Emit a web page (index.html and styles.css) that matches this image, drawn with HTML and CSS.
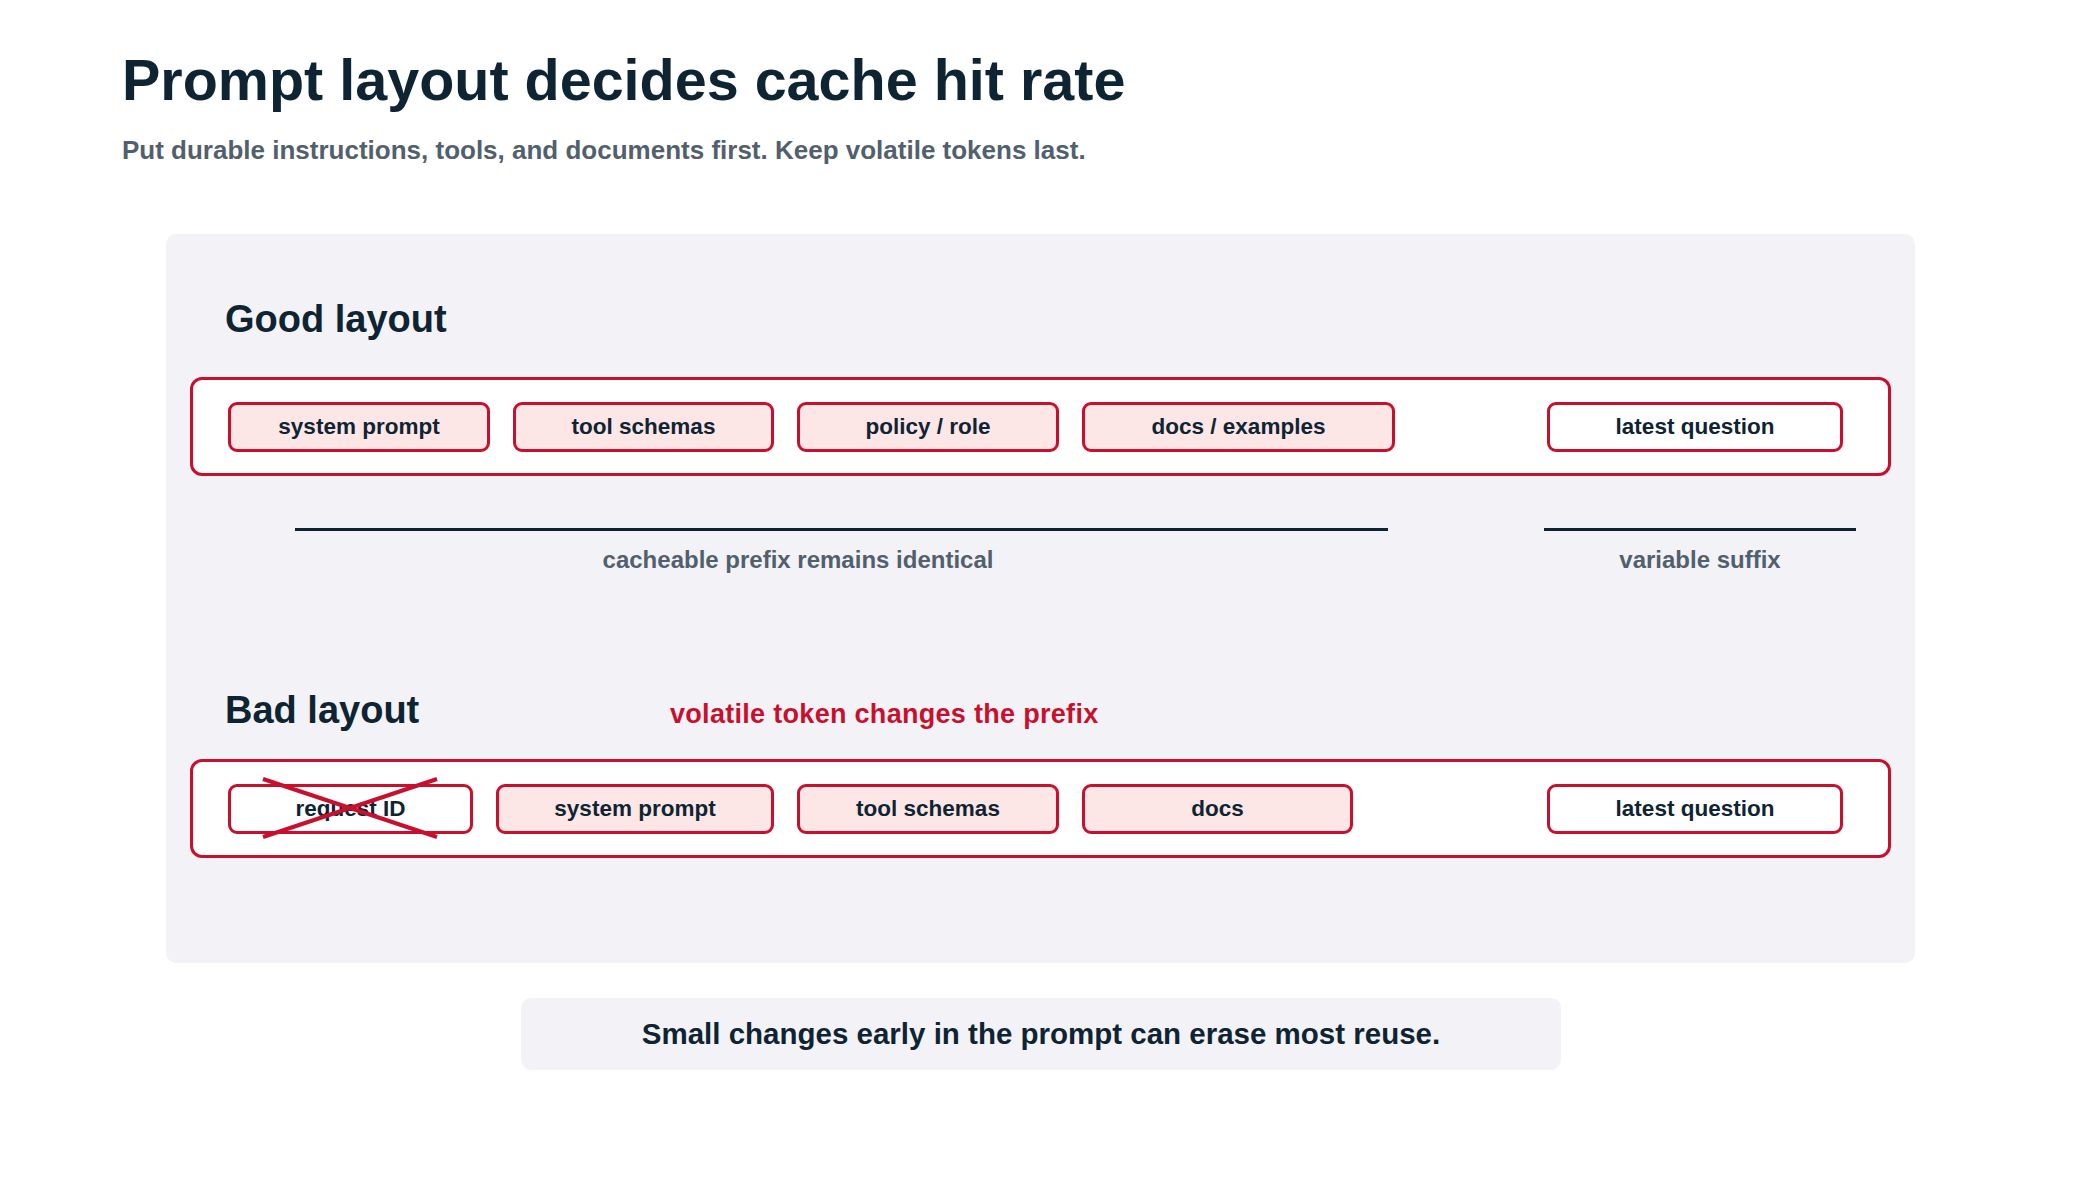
FILE: index.html
```html
<!DOCTYPE html>
<html lang="en">
<head>
<meta charset="utf-8">
<title>Prompt layout decides cache hit rate</title>
<link rel="stylesheet" href="styles.css">
</head>
<body>
<header class="hero">
  <h1 class="title">Prompt layout decides cache hit rate</h1>
  <p class="subtitle">Put durable instructions, tools, and documents first. Keep volatile tokens last.</p>
</header>

<main class="panel">
  <section class="block block-good">
    <h2 class="block-title">Good layout</h2>
    <div class="seq">
      <div class="seq-prefix">
        <div class="chip chip-cached w262">system prompt</div>
        <div class="chip chip-cached w261">tool schemas</div>
        <div class="chip chip-cached w262">policy / role</div>
        <div class="chip chip-cached w313">docs / examples</div>
      </div>
      <div class="chip chip-live w296">latest question</div>
    </div>
    <div class="spans">
      <div class="span span-prefix">
        <div class="span-line"></div>
        <div class="span-label label-offset">cacheable prefix remains identical</div>
      </div>
      <div class="span span-suffix">
        <div class="span-line"></div>
        <div class="span-label">variable suffix</div>
      </div>
    </div>
  </section>

  <section class="block block-bad">
    <div class="block-head">
      <h2 class="block-title head-wide">Bad layout</h2>
      <p class="warning">volatile token changes the prefix</p>
    </div>
    <div class="seq">
      <div class="seq-prefix">
        <div class="chip chip-live chip-struck w245">request ID
          <svg class="strike" width="174" height="58" viewBox="0 0 174 58" aria-hidden="true">
            <line x1="0" y1="0" x2="174" y2="58"/>
            <line x1="0" y1="58" x2="174" y2="0"/>
          </svg>
        </div>
        <div class="chip chip-cached w278">system prompt</div>
        <div class="chip chip-cached w262">tool schemas</div>
        <div class="chip chip-cached w271">docs</div>
      </div>
      <div class="chip chip-live w296">latest question</div>
    </div>
  </section>
</main>

<footer class="note">
  <p class="note-text">Small changes early in the prompt can erase most reuse.</p>
</footer>
</body>
</html>
```

FILE: styles.css
```css
* {
  box-sizing: border-box;
}

html, body {
  margin: 0;
  padding: 0;
  background: #ffffff;
}

body {
  font-family: "Liberation Sans", Arial, Helvetica, sans-serif;
  font-weight: 700;
  color: #0f2433;
  width: 2082px;
  min-height: 1180px;
}

.hero {
  padding: 52px 0 0 122px;
}

.title {
  margin: 0;
  font-size: 57.5px;
  line-height: 57px;
  font-weight: 700;
  color: #0f2433;
}

.subtitle {
  margin: 28px 0 0 0;
  font-size: 26px;
  line-height: 26px;
  color: #52606d;
}

.panel {
  width: 1749px;
  margin: 71px 0 0 166px;
  padding: 66px 24px 105px 24px;
  background: #f3f3f7;
  border-radius: 10px;
}

.block-title {
  margin: 0 0 0 35px;
  font-size: 38px;
  line-height: 38px;
  font-weight: 700;
  color: #0f2433;
}

.seq {
  margin-top: 39px;
  height: 99px;
  display: flex;
  align-items: center;
  padding: 0 45px 0 35px;
  background: #ffffff;
  border: 3px solid #c8102e;
  border-radius: 12px;
}

.seq-prefix {
  display: flex;
  gap: 23px;
}

.chip {
  position: relative;
  height: 50px;
  display: flex;
  align-items: center;
  justify-content: center;
  border: 3px solid #c8102e;
  border-radius: 9px;
  font-size: 22.5px;
  color: #0f2433;
  white-space: nowrap;
}

.chip-cached {
  background: #fde6e6;
}

.chip-live {
  background: #ffffff;
}

.seq > .chip-live {
  margin-left: auto;
}

.w245 { width: 245px; }
.w261 { width: 261px; }
.w262 { width: 262px; }
.w271 { width: 271px; }
.w278 { width: 278px; }
.w296 { width: 296px; }
.w313 { width: 313px; }

.strike {
  position: absolute;
  left: 32px;
  top: -8px;
  overflow: visible;
}

.strike line {
  stroke: #c8102e;
  stroke-width: 4;
}

.spans {
  display: flex;
  margin-top: 52px;
}

.span-prefix {
  margin-left: 105px;
  width: 1093px;
}

.span-suffix {
  margin-left: 156px;
  width: 312px;
}

.span-line {
  height: 3px;
  background: #0f2433;
}

.span-label {
  margin-top: 17px;
  font-size: 24px;
  line-height: 24px;
  text-align: center;
  color: #52606d;
}

.label-offset {
  padding-right: 87px;
}

.block-bad {
  margin-top: 119px;
}

.block-head {
  display: flex;
  align-items: baseline;
}

.head-wide {
  flex: 0 0 445px;
}

.warning {
  margin: 0;
  font-size: 27px;
  line-height: 27px;
  letter-spacing: 0.3px;
  color: #c8102e;
}

.block-bad .seq {
  margin-top: 30px;
}

.note {
  width: 1040px;
  height: 72px;
  margin: 35px 0 0 521px;
  display: flex;
  align-items: center;
  justify-content: center;
  background: #f3f3f7;
  border-radius: 10px;
}

.note-text {
  margin: 0;
  font-size: 29.5px;
  line-height: 30px;
  color: #0f2433;
}
```
